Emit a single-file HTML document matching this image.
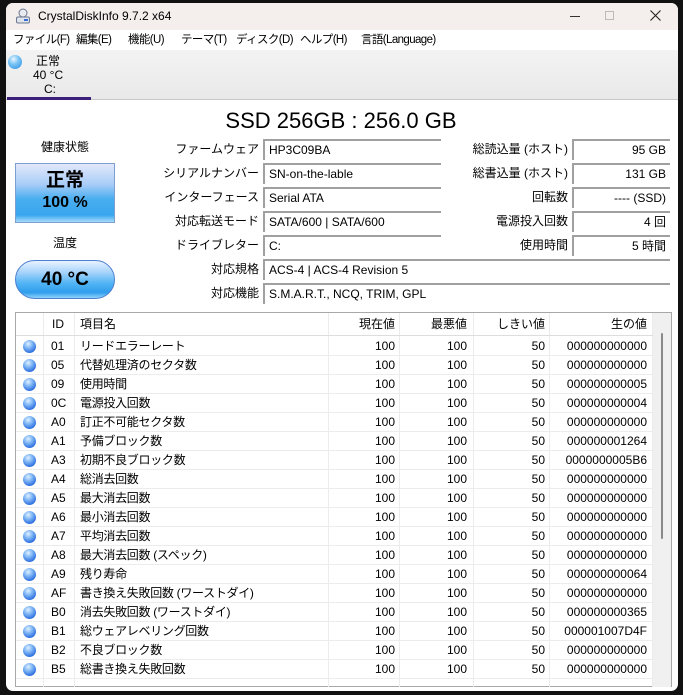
<!DOCTYPE html>
<html><head><meta charset="utf-8"><style>
*{margin:0;padding:0;box-sizing:border-box}
body{width:683px;height:695px;background:#111;position:relative;overflow:hidden;font-family:"Liberation Sans","Noto Sans CJK JP",sans-serif;font-size:12px;line-height:15px;color:#000}
.win{position:absolute;left:6px;top:3px;width:672px;height:688px;background:#fff;border-radius:7px;overflow:hidden}
.title{position:absolute;left:0;top:0;width:100%;height:27px;background:#f4eeed}
.title .t{position:absolute;left:32px;top:6px;font-size:12px}
.menu{position:absolute;left:0;top:27px;width:100%;height:21px;background:#fff}
.menu span{position:absolute;top:3px;font-size:11.5px;letter-spacing:-0.6px}
.tabs{position:absolute;left:0;top:47px;width:100%;height:50px;background:linear-gradient(#f3f3f3,#e9e9e9);border-bottom:1px solid #c8c8c8}
.ul{position:absolute;left:1px;top:94px;width:84px;height:3px;background:#3b1f7a}
.ball{position:absolute;width:13px;height:13px;border-radius:50%;background:radial-gradient(circle at 40% 30%,#dff0ff 0,#7fb6f5 35%,#2d6fe0 75%,#1e4fb8 100%)}
.ab{position:absolute;white-space:nowrap}
.lab{position:absolute;text-align:right;white-space:nowrap;height:15px}
.fld{position:absolute;height:21px;border-top:2px solid #a0a0a0;border-left:2px solid #a0a0a0;padding:2px 0 0 4px;white-space:nowrap}
.fr{text-align:right;padding-right:4px}
.tbl{position:absolute;left:9px;top:309px;width:657px;height:375px;border:1px solid #a8a8a8;background:#fff}
.row{position:absolute;left:0;width:637px;height:19px;border-bottom:1px solid #ececec}
.c{position:absolute;top:2px;white-space:nowrap;height:15px;line-height:15px}
.vl{position:absolute;top:0;width:1px;background:#ececec;height:374px}
</style></head><body>
<div class="win">
 <div class="title">
  <svg style="position:absolute;left:9px;top:5px" width="16" height="16" viewBox="0 0 16 16"><circle cx="8" cy="5" r="4" fill="#e8eaf0" stroke="#6b7890"/><rect x="1.5" y="9" width="13" height="6" rx="1.5" fill="#dfe3ea" stroke="#6b7890"/><rect x="9" y="11" width="4" height="2" fill="#3b6bd6"/></svg>
  <div class="t">CrystalDiskInfo 9.7.2 x64</div>
  <div class="ab" style="left:564px;top:13px;width:10px;height:1px;background:#333"></div>
  <div class="ab" style="left:599px;top:8px;width:9px;height:9px;border:1px solid #bbb"></div>
  <svg style="position:absolute;left:644px;top:7px" width="11" height="11"><path d="M0.5 0.5L10.5 10.5M10.5 0.5L0.5 10.5" stroke="#222" stroke-width="1.1"/></svg>
 </div>
 <div class="menu">
  <span style="left:7px">ファイル(F)</span><span style="left:70px">編集(E)</span><span style="left:122px">機能(U)</span><span style="left:175px">テーマ(T)</span><span style="left:230px">ディスク(D)</span><span style="left:294px">ヘルプ(H)</span><span style="left:355px">言語(Language)</span>
 </div>
 <div class="tabs">
  <div class="ball" style="left:2px;top:5px;width:14px;height:14px;background:radial-gradient(circle at 40% 30%,#e8f6ff 0,#79c3f5 40%,#2a8de0 100%)"></div>
  <div class="ab" style="left:30px;top:4px">正常</div>
  <div class="ab" style="left:27px;top:18px">40 °C</div>
  <div class="ab" style="left:38px;top:32px">C:</div>
 </div>
 <div class="ul"></div>

 <div class="ab" style="left:0;width:670px;text-align:center;top:105px;font-size:22px;line-height:26px">SSD 256GB : 256.0 GB</div>

 <div class="ab" style="left:9px;width:100px;text-align:center;top:137px">健康状態</div>
 <div class="ab" style="left:9px;top:160px;width:100px;height:60px;border:1px solid #7d9fd0;background:linear-gradient(#e2e8fb 0%,#a9cdf7 35%,#4aaef0 60%,#38a6ee 88%,#a8dcfa 100%);text-align:center;font-weight:bold">
  <div style="font-size:19px;margin-top:5px;line-height:24px">正常</div>
  <div style="font-size:16px;line-height:20px">100 %</div>
 </div>
 <div class="ab" style="left:9px;width:100px;text-align:center;top:233px">温度</div>
 <div class="ab" style="left:9px;top:257px;width:100px;height:39px;border-radius:20px;border:1px solid #4d7fd0;background:linear-gradient(#e9f3ff 0%,#a8d4fb 30%,#52b4f4 60%,#2f9ded 85%,#8fd2fa 100%);text-align:center;font-weight:bold;font-size:19px;line-height:38px">40 °C</div>

 <div class="lab" style="left:150px;width:103px;top:139px">ファームウェア</div>
 <div class="lab" style="left:150px;width:103px;top:163px">シリアルナンバー</div>
 <div class="lab" style="left:150px;width:103px;top:187px">インターフェース</div>
 <div class="lab" style="left:150px;width:103px;top:211px">対応転送モード</div>
 <div class="lab" style="left:150px;width:103px;top:235px">ドライブレター</div>
 <div class="lab" style="left:150px;width:103px;top:259px">対応規格</div>
 <div class="lab" style="left:150px;width:103px;top:283px">対応機能</div>
 <div class="fld" style="left:257px;top:136px;width:178px">HP3C09BA</div>
 <div class="fld" style="left:257px;top:160px;width:178px">SN-on-the-lable</div>
 <div class="fld" style="left:257px;top:184px;width:178px">Serial ATA</div>
 <div class="fld" style="left:257px;top:208px;width:178px">SATA/600 | SATA/600</div>
 <div class="fld" style="left:257px;top:232px;width:178px">C:</div>
 <div class="fld" style="left:257px;top:256px;width:407px">ACS-4 | ACS-4 Revision 5</div>
 <div class="fld" style="left:257px;top:280px;width:407px">S.M.A.R.T., NCQ, TRIM, GPL</div>

 <div class="lab" style="left:440px;width:122px;top:139px">総読込量 (ホスト)</div>
 <div class="lab" style="left:440px;width:122px;top:163px">総書込量 (ホスト)</div>
 <div class="lab" style="left:440px;width:122px;top:187px">回転数</div>
 <div class="lab" style="left:440px;width:122px;top:211px">電源投入回数</div>
 <div class="lab" style="left:440px;width:122px;top:235px">使用時間</div>
 <div class="fld fr" style="left:566px;top:136px;width:98px">95 GB</div>
 <div class="fld fr" style="left:566px;top:160px;width:98px">131 GB</div>
 <div class="fld fr" style="left:566px;top:184px;width:98px">---- (SSD)</div>
 <div class="fld fr" style="left:566px;top:208px;width:98px">4 回</div>
 <div class="fld fr" style="left:566px;top:232px;width:98px">5 時間</div>

 <div class="tbl">
  <div class="vl" style="left:27px"></div><div class="vl" style="left:58px"></div><div class="vl" style="left:312px"></div><div class="vl" style="left:383px"></div><div class="vl" style="left:457px"></div><div class="vl" style="left:533px"></div><div class="vl" style="left:636px"></div>
  <div class="ab" style="left:637px;top:0;width:18px;height:374px;background:#f0f0f0"></div>
  <div class="ab" style="left:645px;top:20px;width:2px;height:206px;background:#8a8a8a;border-radius:1px"></div>
  <div class="row" style="top:0;height:23px;border-bottom:1px solid #ddd">
   <div class="c" style="left:36px;top:4px">ID</div><div class="c" style="left:64px;top:4px">項目名</div>
   <div class="c" style="left:312px;width:67px;text-align:right;top:4px">現在値</div>
   <div class="c" style="left:383px;width:68px;text-align:right;top:4px">最悪値</div>
   <div class="c" style="left:457px;width:72px;text-align:right;top:4px">しきい値</div>
   <div class="c" style="left:533px;width:98px;text-align:right;top:4px">生の値</div>
  </div>
  <div id="rows"></div>
 </div>
</div>
<script>
var d=[["01","リードエラーレート","000000000000"],["05","代替処理済のセクタ数","000000000000"],["09","使用時間","000000000005"],["0C","電源投入回数","000000000004"],["A0","訂正不可能セクタ数","000000000000"],["A1","予備ブロック数","000000001264"],["A3","初期不良ブロック数","0000000005B6"],["A4","総消去回数","000000000000"],["A5","最大消去回数","000000000000"],["A6","最小消去回数","000000000000"],["A7","平均消去回数","000000000000"],["A8","最大消去回数 (スペック)","000000000000"],["A9","残り寿命","000000000064"],["AF","書き換え失敗回数 (ワーストダイ)","000000000000"],["B0","消去失敗回数 (ワーストダイ)","000000000365"],["B1","総ウェアレベリング回数","000001007D4F"],["B2","不良ブロック数","000000000000"],["B5","総書き換え失敗回数","000000000000"]];
var h="";d.forEach(function(r,i){var t=24+i*19;h+='<div class="row" style="top:'+t+'px"><div class="ball" style="left:7px;top:3px"></div><div class="c" style="left:35px">'+r[0]+'</div><div class="c" style="left:64px;letter-spacing:-0.3px">'+r[1]+'</div><div class="c" style="left:312px;width:67px;text-align:right">100</div><div class="c" style="left:383px;width:68px;text-align:right">100</div><div class="c" style="left:457px;width:72px;text-align:right">50</div><div class="c" style="left:533px;width:98px;text-align:right">'+r[2]+'</div></div>';});
document.getElementById("rows").innerHTML=h;
</script>
</body></html>
